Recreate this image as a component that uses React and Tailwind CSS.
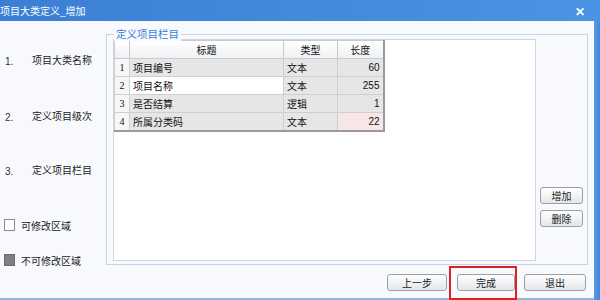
import React from "react";

const FONT = "font-['Noto_Sans_CJK_SC','Noto_Sans',sans-serif]";

const ROWS = [
    { no: 1, title: "项目编号", type: "文本", len: 60 },
    { no: 2, title: "项目名称", type: "文本", len: 255, editing: true },
    { no: 3, title: "是否结算", type: "逻辑", len: 1 },
    { no: 4, title: "所属分类码", type: "文本", len: 22, pink: true },
];

function Btn({ children, className = "" }) {
    return (
        <button
            className={`h-[17px] rounded-[3px] border border-[#9aa0a8] bg-gradient-to-b from-white to-[#e4e6ea] text-[10px] leading-none text-[#222] flex items-center justify-center ${className}`}
        >
            {children}
        </button>
    );
}

function StepLabel({ no, text, className = "" }) {
    return (
        <div className={`flex items-center h-[16px] ${className}`}>
            <span className="w-[32px] pl-[5px] pt-[4px] text-[10px] text-[#333] font-['Liberation_Sans',sans-serif]">{no}</span>
            <span className="text-[10px] text-[#222]">{text}</span>
        </div>
    );
}

function ItemTable() {
    return (
        <table className="border-collapse table-fixed text-[10px] text-[#111] border-r-2 border-b-2 border-[#9a9a9a]">
            <colgroup>
                <col className="w-[15px]" />
                <col className="w-[154px]" />
                <col className="w-[54px]" />
                <col className="w-[46px]" />
            </colgroup>
            <thead>
                <tr className="h-[18px] bg-gradient-to-b from-white to-[#eef0f3]">
                    <th className="border border-[#c9cbd0] font-normal"></th>
                    <th className="border border-[#c9cbd0] font-normal">标题</th>
                    <th className="border border-[#c9cbd0] font-normal">类型</th>
                    <th className="border border-[#c9cbd0] font-normal">长度</th>
                </tr>
            </thead>
            <tbody>
                {ROWS.map((r) => (
                    <tr key={r.no} className="h-[18px]">
                        <td className="border border-[#cfcfcf] bg-[#f7f7f7] text-center text-[10px] font-['Liberation_Serif',serif]">{r.no}</td>
                        <td className={`border border-[#cfcfcf] pl-[3px] ${r.editing ? "bg-white" : "bg-[#e6e6e6]"}`}>{r.title}</td>
                        <td className="border border-[#cfcfcf] bg-[#e6e6e6] pl-[3px]">{r.type}</td>
                        <td className={`border border-[#cfcfcf] pr-[3px] text-right text-[10px] font-['Liberation_Sans',sans-serif] ${r.pink ? "bg-[#f8e6e6]" : "bg-[#e6e6e6]"}`}>{r.len}</td>
                    </tr>
                ))}
            </tbody>
        </table>
    );
}

export default function App() {
    return (
        <div className={`w-[600px] h-[300px] flex flex-col bg-[#f7f9fd] overflow-hidden ${FONT}`}>
            {/* title bar */}
            <div className="h-[21px] shrink-0 flex items-center justify-between bg-gradient-to-r from-[#3a7fd4] to-[#4b93e4] text-white">
                <span className="text-[10px] leading-none">项目大类定义_增加</span>
                <span className="pr-[15px] text-[12px] font-bold leading-none">✕</span>
            </div>

            <div className="flex flex-1 min-h-0">
                <div className="w-[594px] flex flex-col border-b-2 border-[#8fb3e3]">
                    <div className="flex flex-1">
                        {/* left steps */}
                        <div className="w-[106px] flex flex-col">
                            <StepLabel no="1." text="项目大类名称" className="mt-[30px]" />
                            <StepLabel no="2." text="定义项目级次" className="mt-[40px]" />
                            <StepLabel no="3." text="定义项目栏目" className="mt-[38px]" />
                            <div className="flex items-center h-[16px] mt-[40px] pl-[4px]">
                                <span className="w-[11px] h-[12px] border border-[#8a8a8a] bg-white"></span>
                                <span className="ml-[6px] text-[10px] text-[#222]">可修改区域</span>
                            </div>
                            <div className="flex items-center h-[16px] mt-[19px] pl-[4px]">
                                <span className="w-[11px] h-[12px] border border-[#6a6a6a] bg-[#808080]"></span>
                                <span className="ml-[6px] text-[10px] text-[#222]">不可修改区域</span>
                            </div>
                        </div>

                        {/* right column */}
                        <div className="flex-1 flex flex-col">
                            <div className="relative mt-[13px] w-[482px] h-[231px] border border-[#c3d3ea] flex pl-[6px] pt-[4px]">
                                <span className="absolute -top-[8px] left-[7px] px-[2px] bg-[#f7f9fd] text-[10.5px] leading-[14px] text-[#3b7fd9]">定义项目栏目</span>
                                <div className="w-[423px] h-[222px] border border-[#d2d6dc] bg-white">
                                    <ItemTable />
                                </div>
                                <div className="flex flex-col ml-[4px] mt-[148px] gap-[6px]">
                                    <Btn className="w-[43px]">增加</Btn>
                                    <Btn className="w-[43px]">删除</Btn>
                                </div>
                            </div>

                            {/* bottom buttons */}
                            <div className="flex items-start justify-end pr-[8px] pt-[1px]">
                                <Btn className="w-[60px] mt-[8px]">上一步</Btn>
                                <div className="ml-[2px] w-[68px] h-[34px] border-2 border-[#e02020] pl-[6px] pt-[6px]">
                                    <Btn className="w-[58px]">完成</Btn>
                                </div>
                                <Btn className="w-[62px] ml-[7px] mt-[8px]">退出</Btn>
                            </div>
                        </div>
                    </div>
                </div>
                <div className="w-[6px] bg-gradient-to-r from-[#5c9be6] to-[#3f86da]"></div>
            </div>
        </div>
    );
}
